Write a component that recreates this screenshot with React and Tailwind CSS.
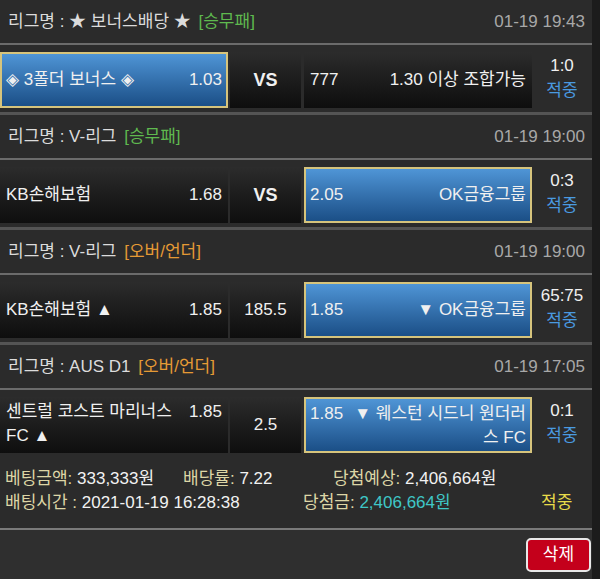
import React from 'react';

const font = { fontFamily: '"Liberation Sans", "Noto Sans CJK KR", sans-serif' };

const bets = [
  {
    league: '★ 보너스배당 ★',
    type: '[승무패]',
    typeColor: 'text-[#5fb94f]',
    time: '01-19 19:43',
    left: { name: '◈ 3폴더 보너스 ◈', odds: '1.03' },
    mid: 'VS',
    right: { odds: '777', name: '1.30 이상 조합가능' },
    pick: 'left',
    score: '1:0',
  },
  {
    league: 'V-리그',
    type: '[승무패]',
    typeColor: 'text-[#5fb94f]',
    time: '01-19 19:00',
    left: { name: 'KB손해보험', odds: '1.68' },
    mid: 'VS',
    right: { odds: '2.05', name: 'OK금융그룹' },
    pick: 'right',
    score: '0:3',
  },
  {
    league: 'V-리그',
    type: '[오버/언더]',
    typeColor: 'text-[#e59a35]',
    time: '01-19 19:00',
    left: { name: 'KB손해보험 ▲', odds: '1.85' },
    mid: '185.5',
    right: { odds: '1.85', name: '▼ OK금융그룹' },
    pick: 'right',
    score: '65:75',
  },
  {
    league: 'AUS D1',
    type: '[오버/언더]',
    typeColor: 'text-[#e59a35]',
    time: '01-19 17:05',
    left: { name: '센트럴 코스트 마리너스 FC ▲', odds: '1.85' },
    mid: '2.5',
    right: { odds: '1.85', name: '▼ 웨스턴 시드니 원더러스 FC' },
    pick: 'right',
    score: '0:1',
  },
];

const cellBase = 'h-[56px] flex items-center';
const dark = 'bg-gradient-to-b from-[#2c2c2c] to-[#0e0e0e]';
const blue = 'bg-gradient-to-b from-[#4f95d6] to-[#1b4f87] border-2 border-[#d6c47c]';

const Side = ({ side, first, selected }) => {
  const wrap = side.name.length > 14;
  return (
    <div
      className={`${cellBase} w-[228px] shrink-0 ${selected ? blue : dark} ${wrap ? 'items-start pt-[3px]' : ''} ${
        selected ? 'px-[4px]' : 'px-[6px]'
      } text-[17px] text-[#f0f0f0] leading-[24px]`}
    >
      {first ? (
        <>
          <span className="flex-1">{side.name}</span>
          <span className="pl-2">{side.odds}</span>
        </>
      ) : (
        <>
          <span className="pr-2">{side.odds}</span>
          <span className="flex-1 text-right">{side.name}</span>
        </>
      )}
    </div>
  );
};

export default function App() {
  return (
    <div className="w-[600px] min-h-[579px] bg-[#1c1c1c] flex" style={font}>
      <div className="w-[592px] bg-[#2b2b2b]">
        {bets.map((b, i) => (
          <div key={i}>
            {/* League header */}
            <div className="h-[45px] flex items-center justify-between pl-[8px] pr-[7px] border-b-2 border-[#6b6b6b] text-[17px]">
              <div className="text-[#dcdcdc]">
                리그명 : {b.league} <span className={`${b.typeColor} ml-[3px]`}>{b.type}</span>
              </div>
              <div className="text-[#a8a8a8]">{b.time}</div>
            </div>

            {/* Match row */}
            <div className={`flex pt-[7px] pb-[4px] ${i < bets.length - 1 ? 'border-b-[3px] border-[#545454]' : ''}`}>
              <Side side={b.left} first selected={b.pick === 'left'} />
              <div
                className={`${cellBase} ${dark} w-[71px] ml-[2px] justify-center text-[#f0f0f0] ${
                  b.mid === 'VS' ? 'font-bold text-[18px]' : 'text-[17px]'
                }`}
              >
                {b.mid}
              </div>
              <div className="ml-[3px]">
                <Side side={b.right} selected={b.pick === 'right'} />
              </div>
              <div className="flex-1 flex flex-col items-center justify-center pb-[4px] leading-[25px] text-[17px]">
                <span className="text-[#f0f0f0]">{b.score}</span>
                <span className="text-[#4a9ae0]">적중</span>
              </div>
            </div>
          </div>
        ))}

        {/* Summary */}
        <div className="pt-[10px] pb-[13px] pl-[5px] text-[17px] leading-[24px] text-[#f2f2f2] border-b-2 border-[#7a7a7a]">
          <div className="flex">
            <span className="w-[178px]">
              <span className="text-[#ddd6a6]">베팅금액:</span> 333,333원
            </span>
            <span className="w-[150px]">
              <span className="text-[#ddd6a6]">배당률:</span> 7.22
            </span>
            <span>
              <span className="text-[#ddd6a6]">당첨예상:</span> 2,406,664원
            </span>
          </div>
          <div className="flex">
            <span className="w-[298px]">
              <span className="text-[#ddd6a6]">배팅시간 :</span> 2021-01-19 16:28:38
            </span>
            <span className="w-[238px]">
              <span className="text-[#ddd6a6]">당첨금:</span> <span className="text-[#3fc7c7]">2,406,664원</span>
            </span>
            <span className="text-[#e8dc4a]">적중</span>
          </div>
        </div>

        <div className="flex justify-end pt-[8px] pr-[1px] bg-[#2f2f2f] h-[50px]">
          <button className="w-[65px] h-[34px] rounded-[5px] border-2 border-[#e8e8e8] bg-[#c4001b] text-white text-[17px]">
            삭제
          </button>
        </div>
      </div>
    </div>
  );
}
